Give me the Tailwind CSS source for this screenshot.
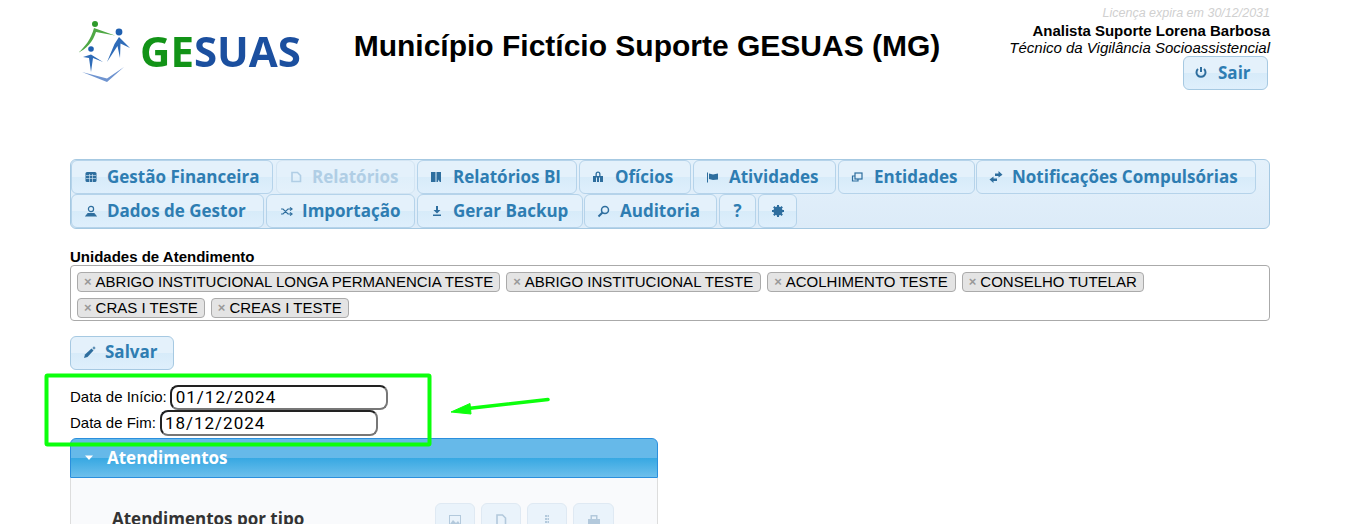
<!DOCTYPE html>
<html lang="pt-BR">
  <head>
    <meta charset="UTF-8" />
    <meta name="viewport" content="width=device-width, initial-scale=1.0" />
    <title>GESUAS</title>
    <script src="https://cdn.jsdelivr.net/npm/@tailwindcss/browser@4"></script>
  </head>
  <body class="relative h-[524px] overflow-hidden bg-white font-['Liberation_Sans',sans-serif] text-black">
    <!-- header -->
    <header class="flex h-[159px] items-start pl-[70px] pr-[98px]">
      <div class="flex w-[240px] shrink-0 items-start pt-[20px] pl-[6px] blur-[0.4px]">
        <svg class="h-[64px] w-[56px] shrink-0" viewBox="0 0 56 64" fill="none">
          <circle cx="19" cy="4" r="3" fill="#2e9a2a" />
          <path d="M2 33C9 27 15 19 18 8L39 15.5 20 12C17 22 10 29 2 33Z" fill="#4fa845" />
          <circle cx="43" cy="12" r="3.4" fill="#1f5fb0" />
          <path d="M43 17L54 28 44.5 23.5 44 38 41.5 26 31 42 38.5 24Z" fill="#2f6cb8" />
          <circle cx="15" cy="29" r="2.8" fill="#1f5fb0" />
          <path d="M7 37L15 34.5 27 42 17 38 15 52 13 38Z" fill="#2f6cb8" />
          <path d="M6 52L31 58.5 48 47 31 62Z" fill="#6f94d0" />
        </svg>
        <span class="mt-[10px] ml-[8px] font-['Open_Sans',sans-serif] text-[42px] leading-[42px] font-bold text-[#1b4f9f]"><span class="text-[#129317]">GE</span>SUAS</span>
      </div>
      <h1 class="flex-1 pt-[27px] pr-[16px] text-center text-[30px] leading-[38px] font-bold">Município Fictício Suporte GESUAS (MG)</h1>
      <div class="flex w-[270px] shrink-0 flex-col items-end pt-[5px] text-[15px] leading-[17px]">
        <p class="text-[12.5px] leading-[17px] text-[#d0d0d0] italic">Licença expira em 30/12/2031</p>
        <p class="font-bold">Analista Suporte Lorena Barbosa</p>
        <p class="italic">Técnico da Vigilância Socioassistencial</p>
        <button class="mr-[2px] flex h-[34px] w-[85px] items-center rounded-[6px] border border-[#a6c9e2] bg-[linear-gradient(#e4f1fb_50%,#d7ebf9_50%,#dfeffc)] pb-[2px] pl-[10px] font-['Open_Sans',sans-serif] text-[17px] font-bold text-[#2e7db2]">
          <svg class="mr-[10px] h-[14px] w-[14px]" viewBox="0 0 14 14" fill="none" stroke="#2e6e9e" stroke-width="2"><path d="M7 2V7" /><path d="M4 4A4.5 4.5 0 1 0 10 4" /></svg>Sair
        </button>
      </div>
    </header>

    <main class="ml-[70px] w-[1200px]">
      <!-- menu -->
      <nav class="flex h-[70px] flex-wrap content-start gap-x-[2px] rounded-[6px] border border-[#a6c9e2] bg-[linear-gradient(#e4f1fb,#dcebf8)] font-['Open_Sans',sans-serif] text-[17px] font-bold text-[#2e7db2]">
        <a class="flex h-[34px] w-[202px] items-center rounded-[6px] border border-[#b5d3ea] bg-[linear-gradient(#e4f1fb_50%,#d7ebf9_50%,#dfeffc)] pl-[13px]">
          <svg class="mr-[10px] h-[12px] w-[12px] shrink-0" viewBox="0 0 12 12"><rect x="0.5" y="1" width="11" height="10" rx="1.5" fill="#2e6e9e" /><path d="M1 4.5H11M1 7.5H11M4.5 3V11M7.5 3V11" stroke="#dcecf8" stroke-width="0.6" /></svg>Gestão Financeira
        </a>
        <a class="ml-[1px] flex h-[34px] w-[139px] items-center rounded-[6px] border border-[#d3e5f3] bg-[linear-gradient(#e4f1fb_50%,#dfeffa_50%,#e4f1fb)] pl-[13px] text-[#b0cee5]">
          <svg class="mr-[10px] h-[12px] w-[12px] shrink-0" viewBox="0 0 12 12" fill="none" stroke="#b0cee5" stroke-width="1.6"><path d="M2 1.5H7.5L10.5 4.5V10.5H2Z" /></svg>Relatórios
        </a>
        <a class="flex h-[34px] w-[160px] items-center rounded-[6px] border border-[#b5d3ea] bg-[linear-gradient(#e4f1fb_50%,#d7ebf9_50%,#dfeffc)] pl-[12px]">
          <svg class="mr-[11px] h-[12px] w-[12px] shrink-0" viewBox="0 0 12 12" fill="#2e6e9e"><path d="M1 1H5.5V11H1ZM6.5 1H11V11H9.7L8.7 8.5 7.8 11H6.5Z" /></svg>Relatórios BI
        </a>
        <a class="flex h-[34px] w-[112px] items-center rounded-[6px] border border-[#b5d3ea] bg-[linear-gradient(#e4f1fb_50%,#d7ebf9_50%,#dfeffc)] pl-[12px]">
          <svg class="mr-[11px] h-[12px] w-[12px] shrink-0" viewBox="0 0 12 12" fill="#2e6e9e"><path d="M3.5 5V3A2.5 2.5 0 0 1 8.5 3V5H11V11H8V6.5H7V11H5V6.5H4V11H1V5ZM4.8 5H7.2V3A1.2 1.2 0 0 0 4.8 3Z" /></svg>Ofícios
        </a>
        <a class="flex h-[34px] w-[143px] items-center rounded-[6px] border border-[#b5d3ea] bg-[linear-gradient(#e4f1fb_50%,#d7ebf9_50%,#dfeffc)] pl-[12px]">
          <svg class="mr-[11px] h-[12px] w-[12px] shrink-0" viewBox="0 0 12 12" fill="#2e6e9e"><path d="M1 1.5H2V11.5H1ZM3 2.5L7 3.5 12 2.5V8.5L7 9 3 8Z" /></svg>Atividades
        </a>
        <a class="flex h-[34px] w-[137px] items-center rounded-[6px] border border-[#b5d3ea] bg-[linear-gradient(#e4f1fb_50%,#d7ebf9_50%,#dfeffc)] pl-[12px]">
          <svg class="mr-[11px] h-[12px] w-[12px] shrink-0" viewBox="0 0 12 12" fill="none" stroke="#2e6e9e" stroke-width="1.2"><rect x="4" y="2" width="7" height="6" /><path d="M4 5H1.5V10H7V8" /></svg>Entidades
        </a>
        <a class="-ml-[1px] flex h-[34px] w-[280px] items-center rounded-[6px] border border-[#b5d3ea] bg-[linear-gradient(#e4f1fb_50%,#d7ebf9_50%,#dfeffc)] pl-[12px]">
          <svg class="mr-[9px] h-[14px] w-[14px] shrink-0" viewBox="0 0 14 14" fill="#2e6e9e"><path d="M6 3.5H9.5V1L13.5 4.8 9.5 7.5V6H6ZM8 8.5H4.5V6.5L.5 9.5 4.5 13V11H8Z" /></svg>Notificações Compulsórias
        </a>
        <a class="flex h-[34px] w-[193px] items-center rounded-[6px] border border-[#b5d3ea] bg-[linear-gradient(#e4f1fb_50%,#d7ebf9_50%,#dfeffc)] pl-[13px]">
          <svg class="mr-[10px] h-[12px] w-[12px] shrink-0" viewBox="0 0 12 12" fill="none" stroke="#2e6e9e" stroke-width="1.2"><circle cx="6" cy="4" r="2.6" /><path d="M1 11H11L9 8.5H3Z" fill="#2e6e9e" /></svg>Dados de Gestor
        </a>
        <a class="flex h-[34px] w-[149px] items-center rounded-[6px] border border-[#b5d3ea] bg-[linear-gradient(#e4f1fb_50%,#d7ebf9_50%,#dfeffc)] pl-[13px]">
          <svg class="mr-[9px] h-[13px] w-[13px] shrink-0" viewBox="0 0 13 13" fill="none" stroke="#2e6e9e" stroke-width="1.2"><path d="M1 4H3L8 9H11M1 9H3L8 4H11" /><path d="M10 2.5L12 4 10 5.5M10 7.5L12 9 10 10.5" /></svg>Importação
        </a>
        <a class="flex h-[34px] w-[166px] items-center rounded-[6px] border border-[#b5d3ea] bg-[linear-gradient(#e4f1fb_50%,#d7ebf9_50%,#dfeffc)] pl-[13px]">
          <svg class="mr-[10px] h-[12px] w-[12px] shrink-0" viewBox="0 0 12 12" fill="#2e6e9e"><path d="M5 1H7V5H9.5L6 8.5 2.5 5H5ZM2 9.5H10V11H2Z" /></svg>Gerar Backup
        </a>
        <a class="-ml-[1px] flex h-[34px] w-[133px] items-center rounded-[6px] border border-[#b5d3ea] bg-[linear-gradient(#e4f1fb_50%,#d7ebf9_50%,#dfeffc)] pl-[12px]">
          <svg class="mr-[10px] h-[13px] w-[13px] shrink-0" viewBox="0 0 13 13" fill="none" stroke="#2e6e9e" stroke-width="1.5"><circle cx="8" cy="5" r="3.5" /><path d="M5.5 7.5L1.5 11.5" stroke-width="2" /></svg>Auditoria
        </a>
        <a class="flex h-[34px] w-[37px] items-center justify-center rounded-[6px] border border-[#b5d3ea] bg-[linear-gradient(#e4f1fb_50%,#d7ebf9_50%,#dfeffc)]">?</a>
        <a class="flex h-[34px] w-[39px] items-center justify-center rounded-[6px] border border-[#b5d3ea] bg-[linear-gradient(#e4f1fb_50%,#d7ebf9_50%,#dfeffc)]">
          <svg class="h-[12px] w-[12px]" viewBox="0 0 12 12"><circle cx="6" cy="6" r="3.4" fill="none" stroke="#2e6e9e" stroke-width="2.4" /><path d="M6 0V12M0 6H12M1.8 1.8L10.2 10.2M10.2 1.8L1.8 10.2" stroke="#2e6e9e" stroke-width="2" /></svg>
        </a>
      </nav>

      <!-- unidades -->
      <label class="mt-[20px] block text-[15px] leading-[16px] font-bold">Unidades de Atendimento</label>
      <div class="flex h-[56px] flex-wrap content-start gap-x-[6px] gap-y-[6px] rounded-[4px] border border-[#aaa] px-[6px] pt-[6px] text-[15px] leading-[18px]">
        <span class="flex h-[20px] items-center rounded-[4px] border border-[#aaa] bg-[#e4e4e4] pr-[6px] pl-[6px]"><span class="mr-[4px] text-[13px] font-bold text-[#999]">×</span>ABRIGO INSTITUCIONAL LONGA PERMANENCIA TESTE</span>
        <span class="flex h-[20px] items-center rounded-[4px] border border-[#aaa] bg-[#e4e4e4] pr-[7px] pl-[6px]"><span class="mr-[4px] text-[13px] font-bold text-[#999]">×</span>ABRIGO INSTITUCIONAL TESTE</span>
        <span class="flex h-[20px] items-center rounded-[4px] border border-[#aaa] bg-[#e4e4e4] pr-[7px] pl-[6px]"><span class="mr-[4px] text-[13px] font-bold text-[#999]">×</span>ACOLHIMENTO TESTE</span>
        <span class="flex h-[20px] items-center rounded-[4px] border border-[#aaa] bg-[#e4e4e4] pr-[6px] pl-[6px]"><span class="mr-[4px] text-[13px] font-bold text-[#999]">×</span>CONSELHO TUTELAR</span>
        <span class="flex h-[20px] items-center rounded-[4px] border border-[#aaa] bg-[#e4e4e4] pr-[6px] pl-[6px]"><span class="mr-[4px] text-[13px] font-bold text-[#999]">×</span>CRAS I TESTE</span>
        <span class="flex h-[20px] items-center rounded-[4px] border border-[#aaa] bg-[#e4e4e4] pr-[6px] pl-[6px]"><span class="mr-[4px] text-[13px] font-bold text-[#999]">×</span>CREAS I TESTE</span>
      </div>

      <button class="mt-[15px] flex h-[34px] w-[104px] items-center rounded-[6px] border border-[#a6c9e2] bg-[linear-gradient(#e4f1fb_50%,#d7ebf9_50%,#dfeffc)] pb-[2px] pl-[12px] font-['Open_Sans',sans-serif] text-[17px] font-bold text-[#2e7db2]">
        <svg class="mr-[8px] h-[14px] w-[14px]" viewBox="0 0 14 14" fill="#2e6e9e"><path d="M1 13L2 9.5 8.5 3.5 10.5 5.5 4.5 12Z" /><path d="M11 1L11.6 2.4 13 3 11.6 3.6 11 5 10.4 3.6 9 3 10.4 2.4Z" /></svg>Salvar
      </button>

      <!-- datas -->
      <div class="mt-[15px] text-[15px]">
        <div class="flex h-[25px] items-center gap-[3px]">
          <span>Data de Início:</span>
          <input class="h-[25px] w-[218px] rounded-[8px] border-2 border-t-[#222] border-r-[#777] border-b-[#777] border-l-[#222] px-[4px] font-['Roboto',sans-serif] text-[17px] tracking-[1px]" value="01/12/2024" />
        </div>
        <div class="flex h-[26px] items-center gap-[4px]">
          <span>Data de Fim:</span>
          <input class="h-[26px] w-[218px] rounded-[8px] border-2 border-t-[#222] border-r-[#777] border-b-[#777] border-l-[#222] px-[3px] font-['Roboto',sans-serif] text-[17px] tracking-[1px]" value="18/12/2024" />
        </div>
      </div>

      <!-- painel -->
      <section class="mt-[2px] w-[588px]">
        <div class="flex h-[40px] items-center rounded-t-[6px] border border-[#2b8fdd] bg-[linear-gradient(#66b9e9_50%,#37a8e2_50%,#6dbfec)] pb-[1px] pl-[13px] font-['Open_Sans',sans-serif] text-[17px] font-bold text-white">
          <svg class="mr-[13px] h-[8px] w-[10px]" viewBox="0 0 10 8" fill="#fff"><path d="M1 1.5H9L5 6Z" /></svg>Atendimentos
        </div>
        <div class="flex h-[60px] items-start justify-between border-x border-[#ddd] bg-[#f9fafc] pt-[25px] pr-[43px] pl-[41px]">
          <h2 class="pt-[6px] font-['Open_Sans',sans-serif] text-[17px] leading-[20px] font-bold text-[#333]">Atendimentos por tipo</h2>
          <div class="flex gap-[6px]">
            <span class="flex h-[34px] w-[40px] justify-center rounded-[6px] border border-[#dfe9f3] bg-[#eaf3fb] pt-[10px]"><svg class="h-[14px] w-[14px]" viewBox="0 0 14 14" fill="#b3c9dc"><path d="M1 1H13V12H1ZM2 2V10L5 6 8 9 10 7 12 10V2Z" /></svg></span>
            <span class="flex h-[34px] w-[40px] justify-center rounded-[6px] border border-[#dfe9f3] bg-[#eaf3fb] pt-[10px]"><svg class="h-[14px] w-[14px]" viewBox="0 0 14 14" fill="none" stroke="#b3c9dc" stroke-width="1.6"><path d="M3 1H8.5L11.5 4V13H3Z" /></svg></span>
            <span class="flex h-[34px] w-[40px] justify-center rounded-[6px] border border-[#dfe9f3] bg-[#eaf3fb] pt-[10px]"><svg class="h-[14px] w-[14px]" viewBox="0 0 14 14" fill="#b3c9dc"><path d="M5 1H7V3H5ZM7.5 1H9V3H7.5ZM5 4H7V6H5ZM7.5 4H9V6H7.5ZM5 7H7V9H5ZM7.5 7H9V9H7.5Z" /></svg></span>
            <span class="flex h-[34px] w-[41px] justify-center rounded-[6px] border border-[#dfe9f3] bg-[#eaf3fb] pt-[10px]"><svg class="h-[14px] w-[14px]" viewBox="0 0 14 14" fill="#b3c9dc"><path d="M3.5 1H10.5V5H13V11H1V5H3.5ZM5 2.5V5H9V2.5Z" /></svg></span>
          </div>
        </div>
      </section>
    </main>

    <!-- marcacao verde por cima da tela -->
    <svg class="pointer-events-none absolute top-0 left-0 h-[524px] w-[1368px]" viewBox="0 0 1368 524" fill="none">
      <rect x="46.5" y="375.5" width="383" height="69" rx="1" stroke="#0cff0c" stroke-width="4" />
      <path d="M548 399.5L468 408.5" stroke="#0cff0c" stroke-width="3.5" stroke-linecap="round" />
      <path d="M451 412L470 403.5 471 414Z" fill="#0cff0c" stroke="#0cff0c" />
    </svg>
  </body>
</html>
